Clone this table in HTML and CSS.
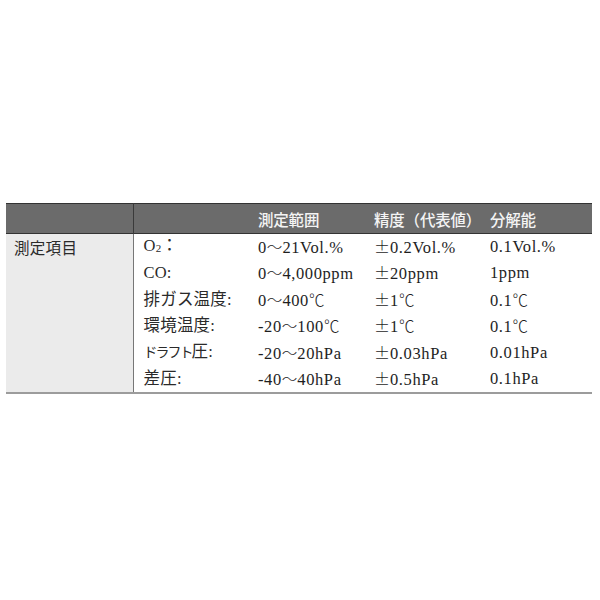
FILE: index.html
```html
<!DOCTYPE html>
<html lang="ja">
<head>
<meta charset="utf-8">
<link rel="stylesheet" href="styles.css">
</head>
<body>
<table class="spec">
  <colgroup>
    <col class="c1"><col class="c2"><col class="c3"><col class="c4"><col class="c5">
  </colgroup>
  <thead>
    <tr>
      <th class="corner"></th>
      <th class="lab"></th>
      <th>測定範囲</th>
      <th>精度（代表値）</th>
      <th>分解能</th>
    </tr>
  </thead>
  <tbody>
    <tr>
      <td class="item" rowspan="6">測定項目</td>
      <td class="lab">O<span class="sub">2</span>：</td>
      <td>0<span class="w">～</span>21Vol.%</td>
      <td><span class="pm">±</span>0.2Vol.%</td>
      <td>0.1Vol.%</td>
    </tr>
    <tr><td class="lab">CO:</td><td>0<span class="w">～</span>4,000ppm</td><td><span class="pm">±</span>20ppm</td><td>1ppm</td></tr>
    <tr><td class="lab">排ガス温度:</td><td>0<span class="w">～</span>400<span class="w">℃</span></td><td><span class="pm">±</span>1<span class="w">℃</span></td><td>0.1<span class="w">℃</span></td></tr>
    <tr><td class="lab">環境温度:</td><td>-20<span class="w">～</span>100<span class="w">℃</span></td><td><span class="pm">±</span>1<span class="w">℃</span></td><td>0.1<span class="w">℃</span></td></tr>
    <tr><td class="lab"><span class="narrow">ドラフト</span>圧:</td><td>-20<span class="w">～</span>20hPa</td><td><span class="pm">±</span>0.03hPa</td><td>0.01hPa</td></tr>
    <tr><td class="lab">差圧:</td><td>-40<span class="w">～</span>40hPa</td><td><span class="pm">±</span>0.5hPa</td><td>0.1hPa</td></tr>
  </tbody>
</table>
</body>
</html>
```
FILE: styles.css
```css
html, body {
  margin: 0;
  padding: 0;
  background: #ffffff;
}
body {
  padding: 203px 8px 0 6px;
}
.spec {
  width: 586px;
  border-collapse: collapse;
  table-layout: fixed;
  font-family: "Liberation Serif", "Noto Sans CJK JP", serif;
  font-size: 16.5px;
  letter-spacing: 0.6px;
  color: #1e1e1e;
}
.c1 { width: 127px; }
.c2 { width: 125px; }
.c3 { width: 116px; }
.c4 { width: 116px; }
.c5 { width: 102px; }
.spec thead tr {
  background: #6b6b6b;
  border-top: 1px solid #333333;
  border-bottom: 1px solid #333333;
}
.spec th {
  height: 29px;
  padding: 0;
  text-align: left;
  font-family: "Noto Sans CJK JP", sans-serif;
  font-weight: 500;
  font-size: 15.5px;
  letter-spacing: -0.2px;
  color: #f4f4f4;
  line-height: 20px;
}
.spec th.corner {
  border-right: 1px solid #3a3a3a;
}
.spec tbody {
  border-bottom: 2px solid #9c9c9c;
}
.spec tbody tr {
  height: 26.5px;
}
.spec td {
  padding: 0;
  white-space: nowrap;
  vertical-align: middle;
  line-height: 20px;
}
.w, .pm {
  font-family: "Noto Sans CJK JP", sans-serif;
  font-weight: 300;
  letter-spacing: 0;
  font-size: 15.5px;
}
.pm {
  font-size: 16px;
}
.spec td.item {
  vertical-align: top;
  background: #ebebeb;
  border-right: 1.5px solid #777777;
  padding: 3px 0 0 8px;
  font-family: "Noto Sans CJK JP", serif;
  font-size: 15.5px;
  letter-spacing: 0.3px;
  color: #2a2a2a;
}
.spec td.lab {
  padding-left: 10px;
  color: #2a2a2a;
  font-family: "Liberation Serif", "Noto Sans CJK JP", serif;
  letter-spacing: 0.2px;
}
.sub {
  font-size: 11px;
  vertical-align: -1px;
}
.narrow {
  letter-spacing: -2px;
  font-size: 14px;
}
```
